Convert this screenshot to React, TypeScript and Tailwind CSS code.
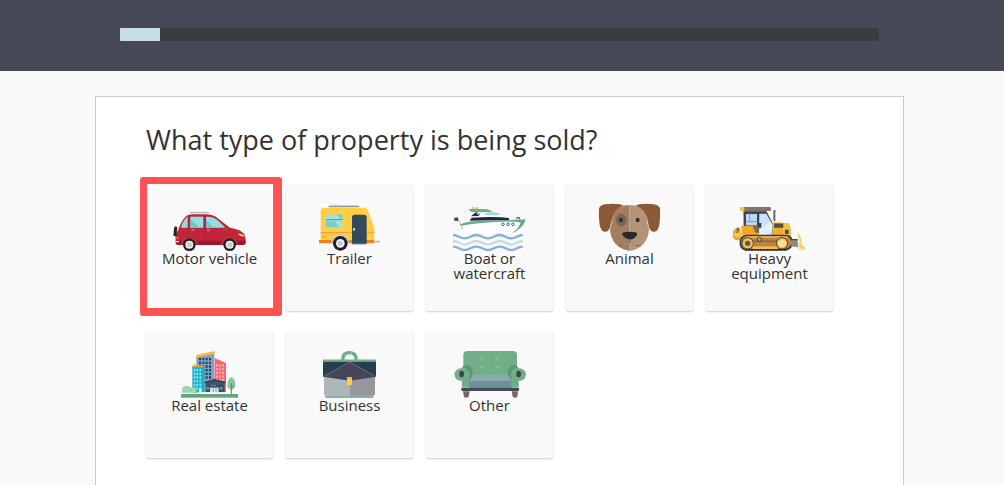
import { useState } from "react";
import type { ReactNode } from "react";

const iconClass = "h-12 w-[76px] shrink-0";

function CarIcon() {
  return (
    <svg className={iconClass} viewBox="111 93 228 144" aria-hidden="true">
      <path d="M165 121.500H222" stroke="#b9bcbf" strokeWidth="4" />
      <path d="M171 128l4-5M184 128l4-5M198 128l4-5M211 128l-4-5" stroke="#b9bcbf" strokeWidth="2" />
      <path
        d="M122 205V188Q122 181 129 176Q137 150 151 135Q158 127 172 127H214Q234 127 247 138L285 167Q321 173 329 188Q333 199 332 213Q331 219 322 219H130Q121 219 122 205Z"
        fill="#c1243b"
      />
      <path d="M121 206H332V214Q331 219 322 219H130Q121 219 121 206Z" fill="#9b1632" />
      <path d="M138 167Q143 147 154 137Q156 134 158 134V167Z" fill="#93dfdf" />
      <path d="M166 134H205V167H166Z" fill="#93dfdf" />
      <path d="M166 141L194 167H166Z" fill="#70c7c9" />
      <path d="M213 134Q234 133 246 143L272 167H213Z" fill="#93dfdf" />
      <path d="M213 143L237 167H213Z" fill="#70c7c9" />
      <path d="M161 129V219M209 129V219" stroke="#a51d36" strokeWidth="2" />
      <path d="M170 174H178M216 174H224" stroke="#e9a5ad" strokeWidth="3" />
      <path d="M264 168L270 164L279 170L274 176L265 174Z" fill="#b8452d" />
      <path d="M118 164Q126 162 127 167L124 192Q117 194 115 190Z" fill="#25262b" />
      <path d="M121 195H131V200H121Z" fill="#e06a3a" />
      <path d="M121 207H132V211H121Z" fill="#f1e4e0" />
      <path d="M311 185Q322 184 329 191L316 192Z" fill="#ffc552" />
      <path d="M310 186L320 192H329" fill="none" stroke="#fff0c5" strokeWidth="2" />
      <path d="M140 217A24 23 0 0 1 187 217M260 217A24 23 0 0 1 307 217" fill="none" stroke="#d54a32" strokeWidth="3" />
      {[163, 284].map((cx) => (
        <g key={cx}>
          <circle cx={cx} cy="218" r="19" fill="#202126" />
          <circle cx={cx} cy="218" r="12" fill="#f0f0f0" />
          <circle cx={cx} cy="218" r="8" fill="#c9cccf" />
        </g>
      ))}
    </svg>
  );
}

function TrailerIcon() {
  return (
    <svg className={iconClass} viewBox="81 69 228 144" aria-hidden="true">
      <path d="M125 84L132 77H220L230 84Z" fill="#d9dcdf" />
      <path d="M132 79H222" stroke="#8e9399" strokeWidth="4" />
      <path d="M144 74H160" stroke="#d9dcdf" strokeWidth="3" />
      <path d="M116 84H238Q246 84 249 91L268 145V182H107V94Q107 84 116 84Z" fill="#ffce45" />
      <path d="M107 158H268" stroke="#f09a3d" strokeWidth="3" />
      <path d="M112 169H126M115 173H123" stroke="#f09a3d" strokeWidth="2" />
      <path d="M102 180H268V190H102Z" fill="#e98517" />
      <path d="M268 185H285" stroke="#b8bdc0" strokeWidth="5" />
      <rect x="123" y="104" width="49" height="37" fill="#9ce5e0" />
      <path d="M123 124H148L164 141H123ZM153 104H172V119Z" fill="#76cdcb" />
      <path d="M123 119H172" stroke="#5a8b93" strokeWidth="3" />
      <path d="M201 192V112Q201 104 209 104H237Q245 104 245 112V192Z" fill="#34495e" />
      <path d="M202 192H244" stroke="#7d8993" strokeWidth="3" />
      <rect x="204" y="144" width="6" height="8" fill="#f4c78a" />
      <path d="M138 188A28 25 0 0 1 194 188Z" fill="#c7cdcf" />
      <circle cx="166" cy="190" r="22" fill="#202126" />
      <circle cx="166" cy="190" r="13" fill="#f2f2f2" />
      <circle cx="166" cy="190" r="8" fill="#c9cccf" />
    </svg>
  );
}

function BoatIcon() {
  return (
    <svg className={iconClass} viewBox="81 69 228 144" aria-hidden="true">
      <path d="M104 135Q170 124 302 118Q293 145 262 159H112Q106 148 104 135Z" fill="#fff" />
      <path d="M105 135Q119 126 145 124L302 118Q297 137 282 147Q270 157 262 159Q282 143 287 128Q270 124 237 125Q165 126 105 138Z" fill="#68ab80" />
      <path d="M139 111L161 97Q210 91 235 110L220 114H139Z" fill="#fff" />
      <path d="M170 104L194 96Q219 96 228 105Z" fill="#92dedb" />
      <path d="M134 122L140 113Q210 108 252 114V120Z" fill="#14284b" />
      <path d="M131 87Q147 85 187 88L204 94L185 97L139 96Z" fill="#6dad84" />
      <path d="M138 109L150 98L158 97L156 104L167 100L160 108Z" fill="#22314e" />
      <path d="M141 84H148M151 84H159" stroke="#f8b252" strokeWidth="5" />
      <path d="M97 113L108 136" stroke="#a7aaac" strokeWidth="2" />
      <path d="M87 114L99 112L100 123L88 122Z" fill="#31496c" />
      <path d="M276 117V113H284V118" fill="none" stroke="#31496c" strokeWidth="3" />
      <rect x="108" y="141" width="6" height="5" fill="#f8b252" />
      {[234, 249, 264].map((cx) => (
        <circle key={cx} cx={cx} cy="133" r="4" fill="#dff6f2" stroke="#397888" strokeWidth="3" />
      ))}
      <g fill="none" strokeWidth="7">
        {[
          { y: 165, color: "#8badd9" },
          { y: 183, color: "#c6dde5" },
          { y: 200, color: "#8badd9" },
        ].map((row) => (
          <path
            key={row.y}
            d={`M84 ${row.y}q9 0 18 5t17 5t17 -5t18 -5t18 5t17 5t17 -5t18 -5t18 5t17 5t17 -5t17 -5`}
            stroke={row.color}
          />
        ))}
      </g>
    </svg>
  );
}

function DogIcon() {
  return (
    <svg className={iconClass} viewBox="81 69 228 144" aria-hidden="true">
      <path d="M194 75Q228 75 240 96Q245 105 246 128L252 148Q251 174 235 192Q219 209 194 213Z" fill="#b49479" />
      <path d="M194 75Q160 75 148 96Q142 107 141 128L135 148Q136 174 152 192Q169 209 194 213Z" fill="#a27d60" />
      <path d="M102 87Q103 76 120 73Q144 69 165 73L176 77Q151 86 143 112L134 145Q131 154 122 155H118Q107 152 104 134Q101 116 102 87Z" fill="#8b5938" />
      <path d="M285 87Q284 76 267 73Q243 69 222 73L212 77Q236 86 245 112L253 145Q256 154 265 155H269Q280 152 283 134Q286 116 285 87Z" fill="#8b5938" />
      <path d="M194 75V157" stroke="#c7b29f" strokeWidth="2" />
      <path d="M176 78Q151 88 144 112L136 145M212 78Q237 88 245 112L252 145" fill="none" stroke="#c19e82" strokeWidth="2" />
      <ellipse cx="169" cy="120" rx="16" ry="19" fill="#74675c" stroke="#89725e" strokeWidth="2" />
      <ellipse cx="168" cy="120" rx="6" ry="7" fill="#303238" />
      <ellipse cx="218" cy="120" rx="6" ry="7" fill="#303238" />
      <path d="M171 161Q172 155 194 155Q216 155 217 162Q216 170 205 176Q194 181 183 175Q172 169 171 161Z" fill="#29292d" />
      <path d="M194 178V189M161 198Q180 198 194 189Q208 198 228 198" fill="none" stroke="#756457" strokeWidth="3" />
      <path d="M174 197Q194 185 214 197" fill="none" stroke="#cdb49e" strokeWidth="2" />
    </svg>
  );
}

function BulldozerIcon() {
  return (
    <svg className={iconClass} viewBox="81 69 228 144" aria-hidden="true">
      <path d="M84 153L94 143L105 142L110 182L90 179L84 172Z" fill="#eda932" />
      <path d="M96 154V146H101V154L94 158" fill="none" stroke="#7b642f" strokeWidth="3" />
      <path d="M87 160H105V170H89" fill="#f7c858" />
      <path d="M114 93H184L203 129H251Q258 142 257 168H112V138H117Z" fill="#f3b638" />
      <path d="M116 94H184L204 131V165H166L149 148H116Z" fill="#43444a" />
      <path d="M123 102H156V136H123Z" fill="#bcd9fc" />
      <path d="M163 101H184L202 132V165H162Z" fill="#cbe1ff" />
      <path d="M163 150L197 125L202 134V151L184 165H163Z" fill="#e5f0ff" />
      <path d="M134 101V126M122 125H157" stroke="#849caf" strokeWidth="3" />
      <path d="M109 137H160V164H110Z" fill="#f5a827" />
      <path d="M160 129H169V143H158Z" fill="#3d3d40" />
      <path d="M143 137H160V158H151Z" fill="#796b59" />
      <rect x="106" y="81" width="92" height="12" rx="3" fill="#80766c" />
      <rect x="106" y="81" width="12" height="12" fill="#ffc934" />
      <path d="M208 123V94L211 91" fill="none" stroke="#68666a" strokeWidth="6" />
      <path d="M203 127Q251 125 255 136L259 168H203Z" fill="#fac245" />
      <path d="M207 130H235V144H207Z" fill="#73623a" />
      <path d="M209 134H233M209 139H233" stroke="#353536" strokeWidth="2" />
      <rect x="240" y="149" width="11" height="13" fill="#4c4b45" />
      <path d="M204 145H235V165H204Z" fill="#efad2c" />
      <path d="M125 167H243Q261 167 261 187T240 209H125Q106 208 106 188T125 167Z" fill="#bd8247" stroke="#3d3933" strokeWidth="5" />
      <path d="M121 171H247" stroke="#efbd5e" strokeWidth="4" />
      <path d="M146 184H216" stroke="#936438" strokeWidth="5" />
      <path d="M142 203H219" stroke="#f4bd48" strokeWidth="8" />
      <path d="M120 210H247" stroke="#30312f" strokeWidth="5" strokeDasharray="7 2" />
      {[128, 231].map((cx) => (
        <g key={cx}>
          <circle cx={cx} cy="190" r="17" fill="#f4c252" stroke="#44403a" strokeWidth="3" />
          <circle cx={cx} cy="190" r={cx === 128 ? 8 : 11} fill={cx === 128 ? "#5e5a52" : "#f8dfa0"} />
        </g>
      ))}
      <circle cx="163" cy="178" r="6" fill="#d9a044" stroke="#4e3c2c" strokeWidth="3" />
      <path d="M258 181L278 180V188L287 196L277 202L258 199Z" fill="#888a91" />
      <path d="M260 179H278" stroke="#41444c" strokeWidth="4" />
      <path d="M276 156Q292 173 289 192L303 207L284 210L277 195L284 185Z" fill="#f5ca63" />
      <path d="M285 184L281 202L294 208" fill="none" stroke="#ffe3a0" strokeWidth="4" />
    </svg>
  );
}

function BuildingsIcon() {
  return (
    <svg className={iconClass} viewBox="81 66 228 144" aria-hidden="true">
      <path d="M154 87L208 76V194H154Z" fill="#829fc4" />
      <path d="M154 81L209 69V77L154 89Z" fill="#f6b842" />
      <path d="M209 90L243 105V194H209Z" fill="#ff646b" />
      <path d="M165 90V154M175 90V154M185 90V154M195 90V154" stroke="#273d59" strokeWidth="6" strokeDasharray="7 4" />
      <path d="M216 109V186M225 109V186M234 109V186" stroke="#ffb7b7" strokeWidth="5" strokeDasharray="7 4" />
      <path d="M142 114H178V194H142Z" fill="#16b3cd" />
      <path d="M142 115H178" stroke="#e5aa45" strokeWidth="4" />
      <path d="M149 114V108" stroke="#efad42" strokeWidth="4" />
      <path d="M149 123V187M157 123V187M166 123V187" stroke="#91e4e9" strokeWidth="5" strokeDasharray="7 4" />
      <path d="M182 163L209 155L239 163V194H182Z" fill="#3e5269" />
      <path d="M178 164L209 155L242 164" fill="none" stroke="#27384e" strokeWidth="4" />
      <path d="M189 173H233" stroke="#2f4157" strokeWidth="3" />
      <path d="M196 172H214" stroke="#8ba8bd" strokeWidth="2" />
      <rect x="195" y="179" width="26" height="15" fill="#d0e4da" />
      <path d="M205 180V194M213 180V194" stroke="#6f969c" strokeWidth="2" />
      <path d="M185 181H192M225 181H232" stroke="#7ba6bd" strokeWidth="6" />
      <path d="M111 194V186Q111 174 124 173Q135 174 138 179Q151 176 155 188V194Z" fill="#9ad3ae" />
      <path d="M124 194V180M145 194V185" stroke="#bfe3ca" strokeWidth="2" />
      <path d="M166 193V181" stroke="#e4f2f2" strokeWidth="7" />
      <path d="M158 194H250" stroke="#fff" strokeWidth="3" />
      <path d="M259 147Q272 152 271 174Q269 184 259 185Q246 182 247 170Q249 151 259 147Z" fill="#86c9a0" />
      <path d="M259 166V199M259 179L266 172" stroke="#8f6b59" strokeWidth="3" />
      <rect x="108" y="198" width="171" height="11" fill="#64a47b" />
    </svg>
  );
}

function BriefcaseIcon() {
  return (
    <svg className={iconClass} viewBox="81 66 228 144" aria-hidden="true">
      <path d="M174 96V90Q175 74 193 74T213 90V96" fill="none" stroke="#6dac88" strokeWidth="10" />
      <path d="M178 80L185 85M201 71L198 79" stroke="#9bc5a8" strokeWidth="3" />
      <rect x="121" y="202" width="144" height="8" fill="#87aeb2" />
      <path d="M117 145H195V203H123Q117 203 117 197Z" fill="#adb7b7" />
      <path d="M195 145H270V197Q270 203 264 203H195Z" fill="#95979d" />
      <rect x="114" y="100" width="159" height="47" fill="#293d50" />
      <path d="M114 146L194 102L273 146L194 158Z" fill="#454557" />
      <path d="M115 146L194 102L272 146" fill="none" stroke="#85858c" strokeWidth="2" />
      <path d="M114 97.500H273" stroke="#70b38a" strokeWidth="6" />
      <rect x="186" y="147" width="15" height="24" rx="2" fill="#ffce43" />
      <path d="M186 148H201V152H186Z" fill="#edb33e" />
    </svg>
  );
}

function SofaIcon() {
  return (
    <svg className={iconClass} viewBox="81 66 228 144" aria-hidden="true">
      <path d="M114 190H134L131 206Q124 212 117 207ZM260 190H279L277 207Q270 212 263 206Z" fill="#79665b" />
      <path d="M115 178V81Q115 69 127 69H264Q276 69 276 81V178Z" fill="#71ae88" />
      <path d="M124 110Q144 113 143 142V160H132L108 134Q108 113 124 110ZM267 110Q248 113 248 142V160H260L283 134Q283 113 267 110Z" fill="#5c9776" />
      <path d="M132 159L143 140H248L260 159V179H132Z" fill="#8baab0" />
      <path d="M132 159H260V179H132Z" fill="#6b9394" />
      <path d="M110 121Q132 120 132 144V178H111V158Q90 160 88 139Q90 122 110 121ZM281 121Q259 120 259 144V178H281V158Q301 160 303 139Q301 122 281 121Z" fill="#71ae88" />
      <path d="M110 121Q132 120 132 144M281 121Q259 120 259 144" fill="none" stroke="#80b994" strokeWidth="2" />
      <ellipse cx="110" cy="138" rx="7" ry="10" fill="#3e4151" />
      <ellipse cx="281" cy="138" rx="7" ry="10" fill="#3e4151" />
      <path d="M109 179H282V186Q282 189 279 189H112Q109 189 109 186Z" fill="#454859" />
      {[
        [171, 93],
        [217, 93],
        [171, 117],
        [217, 117],
      ].map(([cx, cy]) => (
        <circle key={`${cx}-${cy}`} cx={cx} cy={cy} r="4" fill="#68a47c" stroke="#a7cfb1" strokeWidth="2" />
      ))}
    </svg>
  );
}

interface PropertyType {
  id: string;
  label: string;
  icon: ReactNode;
}

const propertyTypes: PropertyType[] = [
  { id: "motor-vehicle", label: "Motor vehicle", icon: <CarIcon /> },
  { id: "trailer", label: "Trailer", icon: <TrailerIcon /> },
  { id: "boat", label: "Boat or watercraft", icon: <BoatIcon /> },
  { id: "animal", label: "Animal", icon: <DogIcon /> },
  { id: "heavy-equipment", label: "Heavy equipment", icon: <BulldozerIcon /> },
  { id: "real-estate", label: "Real estate", icon: <BuildingsIcon /> },
  { id: "business", label: "Business", icon: <BriefcaseIcon /> },
  { id: "other", label: "Other", icon: <SofaIcon /> },
];

export default function App() {
  const [selected, setSelected] = useState("motor-vehicle");
  const progress = 5.27;

  return (
    <div className="min-h-screen bg-[#f9f9f9] font-['Open_Sans',sans-serif] text-[#333]">
      {/* Progress header */}
      <header className="bg-[#474957] pt-7 pr-[5px] pb-[30px]">
        <div
          role="progressbar"
          aria-label="Progress"
          aria-valuenow={progress}
          aria-valuemin={0}
          aria-valuemax={100}
          className="mx-auto h-[13px] max-w-[759px] overflow-hidden rounded-[1px] bg-[#3a3c44]"
        >
          <div className="h-full bg-[#c7dee4]" style={{ width: `${progress}%` }} />
        </div>
      </header>

      {/* Question */}
      <main className="pt-[25px] pr-[5px]">
        <section className="mx-auto max-w-[809px] border border-[#ccc] bg-white px-[50px] pt-6 pb-[50px]">
          <h1 className="text-[27px] leading-[38px]">What type of property is being sold?</h1>

          <div className="mt-[25px] flex flex-wrap gap-x-[13px] gap-y-5">
            {propertyTypes.map((type) => (
              <button
                key={type.id}
                type="button"
                aria-pressed={selected === type.id}
                onClick={() => setSelected(type.id)}
                className="relative flex h-[127px] w-[127px] cursor-pointer flex-col items-center rounded-[2px] bg-[#f9f9f9] px-2 pt-[19px] text-[15px] leading-[15px] shadow-[0_1px_2px_rgba(0,0,0,0.2)]"
              >
                {type.icon}
                <span>{type.label}</span>
                {selected === type.id && (
                  <span className="pointer-events-none absolute -top-[7px] -right-[9px] -bottom-[5px] -left-[6px] rounded-[3px] border-[7px] border-r-8 border-b-8 border-[#fc5252] shadow-[inset_-1px_0_0_#5fa39b]" />
                )}
              </button>
            ))}
          </div>
        </section>
      </main>
    </div>
  );
}
